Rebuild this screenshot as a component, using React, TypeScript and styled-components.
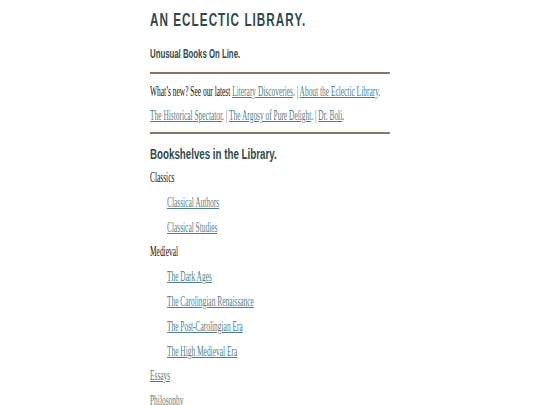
import styled, { createGlobalStyle } from 'styled-components';

const GlobalStyle = createGlobalStyle`
  html, body {
    margin: 0;
    padding: 0;
    background: #ffffff;
  }
  body {
    font-family: "Liberation Serif", "Times New Roman", serif;
    color: #111;
    overflow: hidden;
  }
`;

// the page is drawn in a narrow, squeezed column; the serif text is squeezed more
const SQUEEZE = 0.65;
const SERIF_SQUEEZE = 0.815;
const COLUMN = 240;
const INNER = COLUMN / SQUEEZE;

const Frame = styled.div`
  width: 540px;
  display: flex;
  justify-content: center;
`;

const Column = styled.div`
  width: ${COLUMN}px;
  height: 405px;
  overflow: hidden;
`;

const Inner = styled.div`
  width: ${INNER}px;
  transform: scaleX(${SQUEEZE});
  transform-origin: top left;
  padding-top: 10px;
`;

const SerifBlock = styled.div<{ $top: number }>`
  width: ${INNER / SERIF_SQUEEZE}px;
  margin-top: ${({ $top }) => $top}px;
  transform: scaleX(${SERIF_SQUEEZE});
  transform-origin: top left;
`;

const Title = styled.h1`
  margin: 0;
  font-family: "Liberation Sans", Arial, sans-serif;
  font-weight: 700;
  font-size: 18px;
  line-height: 20px;
  letter-spacing: 1.6px;
  color: #2f4a4c;
`;

const Tagline = styled.p`
  margin: 17px 0 0;
  font-family: "Liberation Sans", Arial, sans-serif;
  font-weight: 700;
  font-size: 12px;
  line-height: 14px;
  color: #2f4a4c;
`;

const Rule = styled.hr<{ $top: number }>`
  margin: ${({ $top }) => $top}px 0 0;
  border: none;
  height: 2px;
  background: #8a7464;
`;

const News = styled.p`
  margin: 0;
  font-size: 14px;
  line-height: 24px;
  white-space: nowrap;
`;

const Link = styled.a`
  color: #4f7f88;
  text-decoration: underline;
  text-underline-offset: 1px;
`;

const Sep = styled.span`
  color: #555;
`;

const Heading = styled.h2`
  margin: 11px 0 0;
  font-family: "Liberation Sans", Arial, sans-serif;
  font-weight: 700;
  font-size: 15px;
  line-height: 18px;
  color: #2f4a4c;
`;

const Shelf = styled.ul`
  list-style: none;
  margin: 0;
  padding: 0;
`;

const Row = styled.li<{ $indent?: boolean }>`
  font-size: 14px;
  line-height: 24.8px;
  padding-left: ${({ $indent }) => ($indent ? 32 : 0)}px;
  white-space: nowrap;
`;

type Item = { label: string, link?: boolean, indent?: boolean };

const shelves: Item[] = [
  { label: 'Classics' },
  { label: 'Classical Authors', link: true, indent: true },
  { label: 'Classical Studies', link: true, indent: true },
  { label: 'Medieval' },
  { label: 'The Dark Ages', link: true, indent: true },
  { label: 'The Carolingian Renaissance', link: true, indent: true },
  { label: 'The Post-Carolingian Era', link: true, indent: true },
  { label: 'The High Medieval Era', link: true, indent: true },
  { label: 'Essays', link: true },
  { label: 'Philosophy', link: true },
];

const App = () => (
  <>
    <GlobalStyle/>
    <Frame>
      <Column>
        <Inner>
          <Title>AN ECLECTIC LIBRARY.</Title>
          <Tagline>Unusual Books On Line.</Tagline>

          <Rule $top={11}/>

          <SerifBlock $top={6}>
            <News>
              What’s new? See our latest <Link href="#">Literary Discoveries</Link><Sep>.</Sep> <Sep>|</Sep> <Link href="#">About the Eclectic Library</Link><Sep>.</Sep>
              <br/>
              <Link href="#">The Historical Spectator</Link><Sep>.</Sep> <Sep>|</Sep> <Link href="#">The Argosy of Pure Delight</Link><Sep>.</Sep> <Sep>|</Sep> <Link href="#">Dr. Boli</Link><Sep>.</Sep>
            </News>
          </SerifBlock>

          <Rule $top={4}/>

          <Heading>Bookshelves in the Library.</Heading>

          <SerifBlock $top={3}>
            <Shelf>
              {shelves.map(item => (
                <Row key={item.label} $indent={item.indent}>
                  {item.link ? <Link href="#">{item.label}</Link> : item.label}
                </Row>
              ))}
            </Shelf>
          </SerifBlock>
        </Inner>
      </Column>
    </Frame>
  </>
);

export default App;
